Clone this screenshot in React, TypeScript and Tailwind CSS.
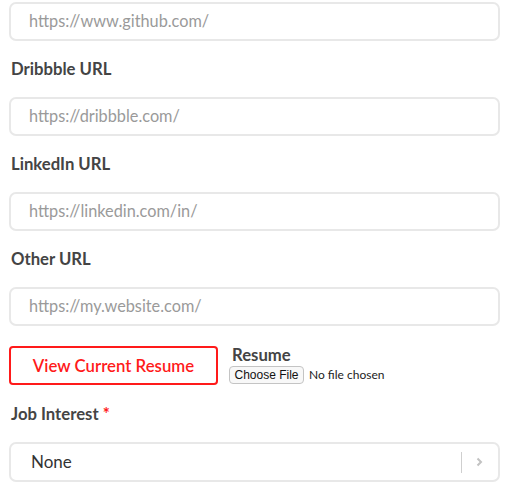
import React from "react";

const font = { fontFamily: "Lato, 'Noto Sans', sans-serif" };

function Field({ label, placeholder, first }: { label?: string; placeholder: string; first?: boolean }) {
  return (
    <div className={first ? "" : "mt-[18px]"}>
      {label && (
        <div className="text-[16.7px] leading-[20px] font-bold text-[#444] pl-[2px] mb-[18px]">{label}</div>
      )}
      <div className="h-[39px] rounded-[7px] border-2 border-[#e8e8e8] flex items-center pl-[18px] text-[16.3px] text-[#9a9a9a]">
        {placeholder}
      </div>
    </div>
  );
}

export default function App() {
  return (
    <div className="w-[532px] h-[503px] bg-white overflow-hidden" style={font}>
      <div className="pl-[9px] w-[500px] pt-[2px]">
        <Field first placeholder="https://www.github.com/" />
        <Field label="Dribbble URL" placeholder="https://dribbble.com/" />
        <Field label="LinkedIn URL" placeholder="https://linkedin.com/in/" />
        <Field label="Other URL" placeholder="https://my.website.com/" />
        <div className="mt-[20px] flex items-start">
          <div className="w-[209px] h-[39px] rounded-[4px] border-2 border-[#ff1a1a] flex items-center justify-center text-[16.8px] text-[#ff1a1a] font-semibold">
            View Current Resume
          </div>
          <div className="ml-[11px] flex flex-col">
            <div className="text-[16.7px] leading-[20px] font-bold text-[#444] pl-[3px] -mt-[1px]">Resume</div>
            <div className="flex items-center mt-[1px]">
              <div className="h-[18px] w-[75px] justify-center rounded-[4px] border border-[#c4c4c4] bg-[#f8f8f8] text-[12px] leading-[15px] text-[#111] flex items-center" style={{ fontFamily: "'Liberation Sans', Arial, sans-serif" }}>
                Choose File
              </div>
              <div className="ml-[5px] text-[12px] text-[#222]" style={{ fontFamily: "Lato, sans-serif" }}>No file chosen</div>
            </div>
          </div>
        </div>
        <div className="mt-[19px] text-[16.7px] leading-[20px] font-bold text-[#444] pl-[2px]">
          Job Interest <span className="text-[#ff1a1a]">*</span>
        </div>
        <div className="mt-[18px] h-[40px] rounded-[7px] border-2 border-[#e8e8e8] flex items-center pl-[20px] text-[17px] text-[#333]">
          <span className="flex-1">None</span>
          <div className="w-px h-[21px] bg-[#cfcfcf]" />
          <svg width="36" height="14" viewBox="0 0 36 14">
            <path d="M15.5 3.5 L19 7 L15.5 10.5" fill="none" stroke="#c2c2c2" strokeWidth="2" />
          </svg>
        </div>
      </div>
    </div>
  );
}
